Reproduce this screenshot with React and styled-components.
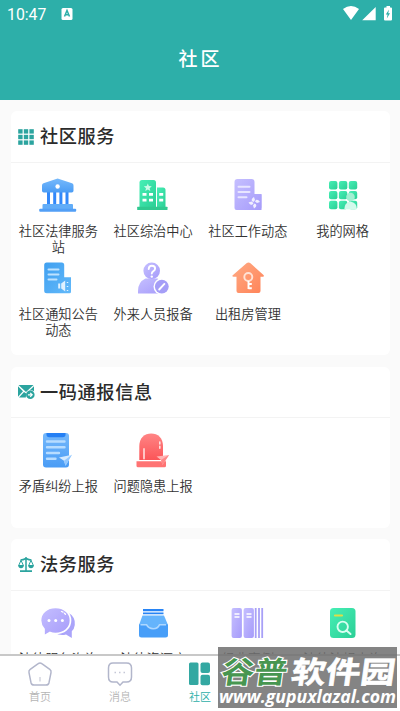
import React from 'react';
import styled, { createGlobalStyle } from 'styled-components';

const GlobalStyle = createGlobalStyle`
  * {
    box-sizing: border-box;
  }
  body {
    margin: 0;
    background: #fafafa;
    font-family: Roboto, 'Noto Sans CJK SC', sans-serif;
  }
`;

const Page = styled.div`
  position: relative;
  display: flex;
  flex-direction: column;
  width: 400px;
  height: 711px;
  overflow: hidden;
  background: #fafafa;
`;
const Header = styled.header`
  flex: none;
  height: 100px;
  background: #2dafa9;
  color: #fff;
`;
const StatusBar = styled.div`
  display: flex;
  align-items: center;
  height: 28px;
  padding: 0 7px;
`;
const Clock = styled.span`
  width: 54px;
  font-size: 15.8px;
`;
const StatusIcons = styled.svg`
  margin-left: auto;
`;
const Title = styled.h1`
  margin: 17px 0 0;
  padding-left: 1px;
  font-size: 19px;
  font-weight: 500;
  line-height: 30px;
  letter-spacing: 3px;
  text-align: center;
`;
const Content = styled.main`
  flex: 1;
  min-height: 0;
  padding: 11px 10px 0 11px;
  overflow: hidden;
`;
const Card = styled.section`
  height: ${props => props.$height}px;
  margin-bottom: ${props => props.$gap || 12}px;
  border-radius: 6px;
  background: #fff;
`;
const CardHeader = styled.div`
  display: flex;
  align-items: center;
  height: ${props => props.$height || 52}px;
  padding-left: 6px;
  border-bottom: 1.5px solid #f3f3f3;
`;
const CardTitle = styled.h2`
  margin: 1px 0 0 5px;
  color: #2b2b2b;
  font-size: 18.2px;
  font-weight: 500;
  line-height: 26px;
  letter-spacing: 0.6px;
`;
const Grid = styled.div`
  display: grid;
  grid-template-columns: repeat(4, 1fr);
  row-gap: 2.5px;
  padding-top: 12px;
`;
const Item = styled.div`
  display: flex;
  flex-direction: column;
  align-items: center;
`;
const Label = styled.span`
  width: 82px;
  margin: 9px 0 -1px;
  color: #333;
  font-size: 13.2px;
  font-weight: 350;
  line-height: 16px;
  text-align: center;
`;
const NavBar = styled.nav`
  display: flex;
  flex: none;
  height: 57px;
  border-top: 2px solid #c8c8c8;
  background: #fff;
`;
const NavItem = styled.div`
  display: flex;
  flex-direction: column;
  align-items: center;
  width: 80px;
  padding-top: 4px;
  color: ${props => (props.$active ? '#2dafa9' : '#b5b5b5')};
  font-size: 11px;
  font-weight: 350;
  line-height: 16px;

  svg {
    margin-bottom: 2px;
  }
`;
const Watermark = styled.div`
  position: absolute;
  top: 647px;
  left: 218px;
  width: 179px;
  height: 61px;
  background: rgba(112, 112, 112, 0.86);
`;

const Gradients = () => (
  <svg width="0" height="0" style={{ position: 'absolute' }}>
    <defs>
      <linearGradient id="blue" x1="0" y1="0" x2="0" y2="1">
        <stop offset="0" stopColor="#76b9fb" />
        <stop offset="1" stopColor="#4a9cf5" />
      </linearGradient>
      <linearGradient id="sky" x1="0" y1="0" x2="1" y2="1">
        <stop offset="0" stopColor="#40a0f0" />
        <stop offset="1" stopColor="#62b9fa" />
      </linearGradient>
      <linearGradient id="green" x1="0" y1="0" x2="1" y2="1">
        <stop offset="0" stopColor="#47efb5" />
        <stop offset="1" stopColor="#2bcf96" />
      </linearGradient>
      <linearGradient id="purple" x1="0" y1="0" x2="1" y2="1">
        <stop offset="0" stopColor="#c5bfff" />
        <stop offset="1" stopColor="#a69bfa" />
      </linearGradient>
      <linearGradient id="orange" x1="0" y1="0" x2="1" y2="1">
        <stop offset="0" stopColor="#ffab85" />
        <stop offset="1" stopColor="#ff8358" />
      </linearGradient>
      <linearGradient id="red" x1="0" y1="0" x2="0" y2="1">
        <stop offset="0" stopColor="#ff8585" />
        <stop offset="1" stopColor="#fb5558" />
      </linearGradient>
    </defs>
  </svg>
);

const Icon = ({ children }) => (
  <svg width="40" height="40" viewBox="0 0 40 40" fill="none">
    {children}
  </svg>
);

const BankIcon = () => (
  <Icon>
    <path d="M9 17h3v13H9zM15.200 17h3v13h-3zM21.400 17h3v13h-3zM27.500 17h3v13h-3z" fill="#3288fa" />
    <path d="M19.600 3.500 34 8.200q1.500.6 1.500 2.200v5.400q0 1.800-1.800 1.800H5.800Q4 17.600 4 15.800v-5.400q0-1.600 1.500-2.200z" fill="url(#blue)" />
    <circle cx="19.600" cy="11.500" r="2.200" fill="#fff" />
    <path d="M5.500 29h28.500q1 0 1 1v4H4.500v-4q0-1 1-1z" fill="#62adf8" />
    <rect x="1.200" y="33.700" width="37" height="3" rx="1" fill="#529ff6" />
  </Icon>
);

const BuildingIcon = () => (
  <Icon>
    <path d="M6.500 7.500q0-2.500 2.500-2.500h11.500q2.500 0 2.500 2.500V32h-16.500z" fill="url(#green)" />
    <path d="M24 12.500h6q2.500 0 2.500 2.500v17H24z" fill="url(#green)" />
    <rect x="4.200" y="31.800" width="30.300" height="3.200" rx="0.500" fill="#30c990" />
    <path d="m14.800 8.500 1.100 2.600 2.900.2-2.200 1.900.7 2.800-2.500-1.500-2.500 1.500.7-2.800-2.200-1.900 2.900-.2z" fill="#c9fbe8" />
    <path d="M9.500 18h4v2.800h-4zM16 18h4v2.800h-4zM26.200 18h4v2.800h-4zM9.500 23.800h4v2.800h-4zM16 23.800h4v2.800h-4zM26.200 23.800h4v2.800h-4z" fill="#fff" />
  </Icon>
);

const WorkIcon = () => (
  <Icon>
    <path d="M24 19h9.500v13q0 3-3 3H18z" fill="#b1aafa" />
    <path d="M6.500 7q0-3 3-3h14q3 0 3 3v12.500h7V35h-25q-2 0-2-2z" fill="url(#purple)" />
    <path d="M10.500 11.800h11M10.500 17h11M10.500 22.200h8" stroke="#e8e5ff" strokeWidth="2" strokeLinecap="round" />
    <path d="M25.500 27c-2.500-1-2.500-3 .5-5l1 3zM25.500 28c-1 2.500-3 2.500-5-.5l3-1zM26.500 28.500c2.500 1 2.500 3-.5 5l-1-3zM27 26.500c1-2.500 3-2.500 5 .5l-3 1z" fill="#f1efff" />
  </Icon>
);

const GridIcon = () => (
  <Icon>
    {[6, 15.9, 25.8].map(y =>
      [6, 15.9, 25.8].map(x => (
        <rect key={`${x}-${y}`} x={x} y={y} width="8.400" height="8.400" rx="2" fill="url(#green)" />
      ))
    )}
    <circle cx="27.500" cy="22" r="4.300" fill="#a2f0d2" />
    <path d="M21.300 34.200q0-6.500 6-7.800 6.700 1.300 6.700 7.800z" fill="#d3faec" />
  </Icon>
);

const NoticeIcon = () => (
  <Icon>
    <path d="M6.200 7q0-2.500 2.500-2.500h15q2.500 0 2.500 2.500v12.200H33v14.500q0 1.500-1.500 1.500H8.700q-2.500 0-2.500-2.500z" fill="url(#sky)" />
    <path d="M10.500 11.500h10M10.500 16.500h10M10.500 21.500h8" stroke="#bee2fe" strokeWidth="2" strokeLinecap="round" />
    <path d="M20.200 25.500h2v5h-2zM23.200 25.500l4-3v11l-4-3z" fill="#dff1ff" />
    <path d="M29.500 24v1M29.500 28v1M29.500 32v1" stroke="#dff1ff" strokeWidth="1.500" />
  </Icon>
);

const VisitorIcon = () => (
  <Icon>
    <path d="M5 35.500V33q0-9 7.500-12.500h12q7 2.500 7.500 15z" fill="url(#purple)" />
    <circle cx="18.700" cy="12.800" r="8.300" fill="url(#purple)" />
    <path d="M15.700 11q.2-3.300 3.200-3.300 3.200 0 3.200 2.800 0 1.700-1.700 2.600-1.600.9-1.600 2.400" stroke="#fff" strokeWidth="1.900" strokeLinecap="round" />
    <circle cx="18.800" cy="18.600" r="1.200" fill="#fff" />
    <circle cx="28.800" cy="28.600" r="8.300" fill="#fff" />
    <circle cx="28.800" cy="28.600" r="6.900" fill="#a59ef7" />
    <path d="m26.200 31.500 5.200-5.600" stroke="#fff" strokeWidth="1.900" strokeLinecap="round" />
  </Icon>
);

const HouseIcon = () => (
  <Icon>
    <path d="M18.500 5.200q2-1.400 4 0L35.500 17q1 1.500-.5 1.800h-2.500V33q0 2-2 2h-20q-2 0-2-2V18.800H5.500q-2-.3-.5-1.800z" fill="url(#orange)" />
    <circle cx="20.300" cy="19" r="4" stroke="#ffe2d5" strokeWidth="1.900" />
    <path d="M20.500 23v8M20.500 26h3.300M20.500 30.200h3.300" stroke="#fff" strokeWidth="1.900" />
  </Icon>
);

const ReportIcon = () => (
  <Icon>
    <rect x="5" y="3" width="26" height="34.500" rx="3" fill="url(#blue)" />
    <path d="M8.500 3h19v1.500q0 2.700-2.700 2.700H11.200q-2.700 0-2.700-2.700z" fill="#247ff4" />
    <path d="M9 11.500h17.500M9 17.300h17.500M9 23h12M9 28.800h8.500" stroke="#b7dcff" strokeWidth="2.400" strokeLinecap="round" />
    <path d="m21 27.500 13-2.800-6.500 11-1.500-5z" fill="#d5eaff" />
    <path d="m26 30.700 8-6-6.500 11z" fill="#91c7ff" />
  </Icon>
);

const AlarmIcon = () => (
  <Icon>
    <path d="M6.300 30V16C6.300 8 11.500 3.500 18.200 3.500S30 8 30 16v14z" fill="url(#red)" />
    <path d="M3.500 31.200h29.500v4.500q0 1.500-1.500 1.500H5q-1.500 0-1.500-1.500z" fill="#ff7373" />
    <path d="M11 19v9.500" stroke="#ffc6c5" strokeWidth="2" strokeLinecap="round" />
    <path d="M26.800 12v2M26.800 16.200v2" stroke="#ffe0df" strokeWidth="1.600" strokeLinecap="round" />
    <path d="m23.500 26.500 12.500-1.500-6.500 10-1.500-5z" fill="#ffb5b5" />
    <path d="m28 30 8-5-6.500 10z" fill="#ff8787" />
  </Icon>
);

const ChatIcon = () => (
  <Icon>
    <path d="M29 9q8.800 4.500 7.800 13-.5 4-3 6.300V35L28 31.500q-6 1.500-11-1.500z" fill="#aaa4fa" />
    <path d="M17.500 4.500c8.500 0 15 5.300 15 13s-6.500 13-15 13c-2 0-4-.4-5.500-1l-6 3.500v-7q-3.500-4-3.500-8.500c0-7.700 6.500-13 15-13z" fill="url(#purple)" stroke="#fff" strokeWidth="1.700" />
    <g fill="#fff">
      <circle cx="11" cy="17.500" r="1.500" />
      <circle cx="17.700" cy="17.500" r="1.500" />
      <circle cx="24.400" cy="17.500" r="1.500" />
    </g>
    <path d="M23.500 8.500q2.800 1 4.300 3.200" stroke="#fff" strokeWidth="1.300" strokeLinecap="round" strokeDasharray="1.500 1.800" />
  </Icon>
);

const ArchiveIcon = () => (
  <Icon>
    <path d="M10 6h20.500v2.200H10zM10 9.500h20.500v1.800H10z" fill="#2784f5" />
    <path d="M9.500 12.500h21.500l4 9.500H6z" fill="#65b4fc" />
    <path d="M6 21.500h8q1.200 4 6 4t6-4h9V32q0 2.500-2.500 2.500h-24Q6 34.500 6 32z" fill="#479ef8" />
    <path d="M14 21.500h12q-1.200 4-6 4t-6-4z" fill="#65b4fc" />
    <path d="M7.500 21.700h6q2 4 6.700 4t6.300-4h6.500" stroke="#add7ff" strokeWidth="1.600" />
  </Icon>
);

const BooksIcon = () => (
  <Icon>
    <rect x="3.600" y="5" width="10.300" height="30" rx="2" fill="url(#purple)" />
    <rect x="15.600" y="5" width="10.300" height="30" rx="2" fill="url(#purple)" />
    <path d="M27.700 5v30M31 5v30M34.200 5v30" stroke="#a8a0f7" strokeWidth="1.800" />
    <path d="M6.500 11h5M6.500 14h5M18.500 11h5M18.500 14h5" stroke="#fff" strokeWidth="1.300" />
  </Icon>
);

const SearchBookIcon = () => (
  <Icon>
    <rect x="7" y="5" width="25.500" height="30" rx="3.500" fill="url(#green)" />
    <path d="M12 12.500h7" stroke="#dedd47" strokeWidth="2.200" strokeLinecap="round" />
    <circle cx="19.700" cy="23.800" r="5.200" stroke="#d9fff1" strokeWidth="1.900" />
    <path d="m23.500 27.500 4 3.500" stroke="#d9fff1" strokeWidth="2" strokeLinecap="round" />
  </Icon>
);

const TilesMark = () => (
  <svg width="18" height="18" viewBox="0 0 18 18" fill="#2ba49f">
    {[1.2, 6.8, 12.4].map(y => [1.2, 6.8, 12.4].map(x => <rect key={`${x}-${y}`} x={x} y={y} width="4.400" height="4.400" />))}
  </svg>
);

const MailMark = () => (
  <svg width="18" height="18" viewBox="0 0 18 18">
    <path d="M1.500 2h15L9 9zM1 3.200l5 5-5 5.500zM17 3.200v5Q13 6 10.300 9.500zM2 14.500l5-5.500 2.200 1.500-.4 4z" fill="#2ba49f" />
    <circle cx="13.300" cy="11.800" r="4.300" fill="#2ba49f" />
    <path d="M10.900 11.800h4M13.200 9.800l2 2-2 2" stroke="#fff" strokeWidth="1.200" fill="none" />
  </svg>
);

const ScaleMark = () => (
  <svg width="18" height="18" viewBox="0 0 18 18" fill="none" stroke="#2ba49f">
    <path d="M9 1v14M3.500 4Q6 4 9 2.500 12 4 14.500 4" strokeWidth="1.500" />
    <path d="M4 4.300 1.700 9.500h4.700zM14 4.300l-2.300 5.200h4.700z" />
    <path d="M1 9.200h6q-.5 3-3 3t-3-3zM11 9.200h6q-.5 3-3 3t-3-3zM3 14.300h12v1.800H3z" fill="#2ba49f" stroke="none" />
  </svg>
);

const sections = [
  {
    title: '社区服务',
    height: 244,
    mark: <TilesMark />,
    items: [
      ['社区法律服务站', BankIcon],
      ['社区综治中心', BuildingIcon],
      ['社区工作动态', WorkIcon],
      ['我的网格', GridIcon],
      ['社区通知公告动态', NoticeIcon],
      ['外来人员报备', VisitorIcon],
      ['出租房管理', HouseIcon],
    ],
  },
  {
    title: '一码通报信息',
    height: 161,
    headerHeight: 51,
    gap: 11,
    mark: <MailMark />,
    items: [
      ['矛盾纠纷上报', ReportIcon],
      ['问题隐患上报', AlarmIcon],
    ],
  },
  {
    title: '法务服务',
    height: 161,
    mark: <ScaleMark />,
    items: [
      ['法律服务咨询', ChatIcon],
      ['法律资源库', ArchiveIcon],
      ['经典案例', BooksIcon],
      ['法律法规查询', SearchBookIcon],
    ],
  },
];

const App = () => (
  <Page>
    <GlobalStyle />
    <Gradients />
    <Header>
      <StatusBar>
        <Clock>10:47</Clock>
        <svg width="12" height="12" viewBox="0 0 12 12">
          <rect x="0.500" width="11" height="12" rx="1.500" fill="#fff" />
          <path d="m3.500 8.500 2.500-6 2.500 6M4.500 6.800h3" stroke="#2dafa9" strokeWidth="1.500" fill="none" />
        </svg>
        <StatusIcons width="52" height="18" viewBox="0 0 52 18" fill="#fff">
          <path d="M2 4q8-6 16 0l-8 11zM34.700 2v13.300H21.200zM43 3.500q0-1 1-1h1.500V1H49v1.500h1q1 0 1 1v11q0 1-1 1h-6q-1 0-1-1z" />
          <path d="m48 4.500-3.200 5h1.800l-.8 4 3.200-5.200h-1.800z" fill="#2dafa9" />
        </StatusIcons>
      </StatusBar>
      <Title>社区</Title>
    </Header>
    <Content>
      {sections.map(({ title, height, headerHeight, gap, mark, items }) => (
        <Card key={title} $height={height} $gap={gap}>
          <CardHeader $height={headerHeight}>
            {mark}
            <CardTitle>{title}</CardTitle>
          </CardHeader>
          <Grid>
            {items.map(([label, ItemIcon]) => (
              <Item key={label}>
                <ItemIcon />
                <Label>{label}</Label>
              </Item>
            ))}
          </Grid>
        </Card>
      ))}
    </Content>
    <NavBar>
      <NavItem>
        <svg width="28" height="28" viewBox="0 0 28 28" fill="none">
          <path d="M12.200 3.700q1.800-1.400 3.600 0l8 5.700q1.700 1.200 1.200 3.200L23 22.700q-.6 2.300-3 2.300H8q-2.400 0-3-2.300L3 12.600q-.5-2 1.200-3.200z" stroke="#b2b6cb" strokeWidth="1.500" />
          <path d="M14 17v4.500" stroke="#d4d6e1" strokeWidth="1.500" />
        </svg>
        首页
      </NavItem>
      <NavItem>
        <svg width="28" height="28" viewBox="0 0 28 28" fill="none">
          <path d="M7 3h13.500q5 0 5 5v9q0 5-5 5h-3.500l-3 3.200-3-3.200H7q-4.500 0-4.500-5V8q0-5 4.500-5z" stroke="#b2b6cb" strokeWidth="1.500" />
          <path d="M8.500 12.500h1.500M13 12.500h1.500M17.500 12.500h1.500" stroke="#c5c8d7" strokeWidth="1.600" />
        </svg>
        消息
      </NavItem>
      <NavItem $active>
        <svg width="28" height="28" viewBox="0 0 28 28" fill="#33a8a2">
          <rect x="3" y="2.500" width="9.500" height="22.500" rx="1.500" />
          <rect x="14.500" y="2.500" width="9.500" height="10.500" rx="2" />
          <rect x="14.500" y="14.700" width="9.500" height="10.500" rx="2" />
        </svg>
        社区
      </NavItem>
    </NavBar>
    <Watermark>
      <svg width="179" height="61" viewBox="0 0 179 61">
        <g transform="skewX(-8)" fontFamily="'Noto Sans CJK SC', sans-serif" fontSize="30" fontWeight="700">
          <text x="7" y="36" textLength="66" lengthAdjust="spacingAndGlyphs" fill="#479650" stroke="#fff" strokeWidth="2.200" paintOrder="stroke">谷普</text>
          <text x="77" y="36" textLength="104" lengthAdjust="spacingAndGlyphs" fill="#fff" stroke="#fff" strokeWidth="0.600">软件园</text>
        </g>
        <text x="1" y="55.500" textLength="177" lengthAdjust="spacingAndGlyphs" fontFamily="'Open Sans', sans-serif" fontSize="18" fontWeight="700" fontStyle="italic" fill="#fff">www.gupuxlazal.com</text>
      </svg>
    </Watermark>
  </Page>
);

export default App;
